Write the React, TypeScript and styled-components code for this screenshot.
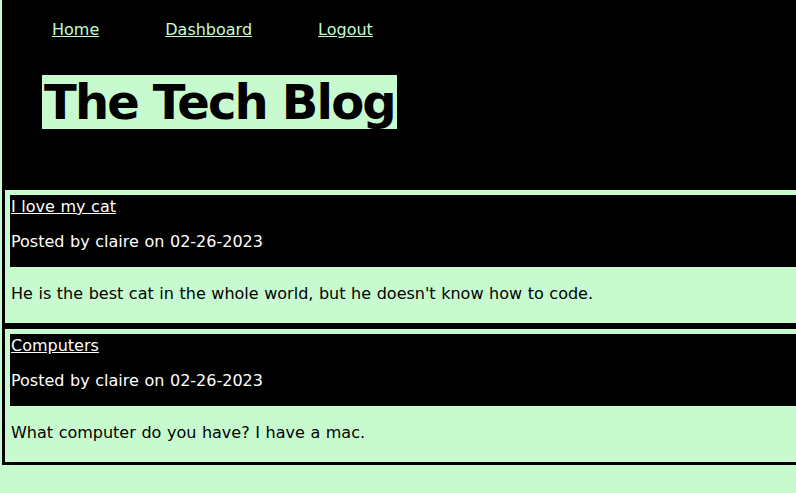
import React from "react";
import styled, { createGlobalStyle } from "styled-components";

const GREEN = "#c7fbcf";

const Global = createGlobalStyle`
  html, body {
    margin: 0;
    padding: 0;
    background: ${GREEN};
    overflow: hidden;
    font-family: "DejaVu Sans", Verdana, sans-serif;
    font-size: 16px;
    word-spacing: 0.5px;
  }
`;

const Page = styled.div`
  padding-left: 2px;
  width: 840px;
`;

const Header = styled.header`
  background: #000;
  height: 190px;
  display: flex;
  flex-direction: column;
  align-items: flex-start;
`;

const Nav = styled.nav`
  display: flex;
  gap: 66px;
  padding: 20px 0 0 50px;
  line-height: 19px;
  word-spacing: 0;
`;

const NavLink = styled.a`
  color: ${GREEN};
  text-decoration: underline;
  cursor: pointer;
`;

const Title = styled.h1`
  margin: 36px 0 0 40px;
  background: ${GREEN};
  color: #000;
  font-size: 48px;
  font-weight: bold;
  letter-spacing: -1.85px;
  word-spacing: 0;
  line-height: 54px;
  padding: 0 2px;
`;

const Card = styled.article`
  border: 3px solid #000;
  padding: 5px;
  background: ${GREEN};
  &:first-of-type {
    border-top: none;
  }
`;

const CardHeader = styled.div`
  background: #000;
  color: #fff;
  padding: 0 1px;
  display: flex;
  flex-direction: column;
  line-height: 19px;
`;

const PostTitle = styled.a`
  color: #fff;
  text-decoration: underline;
  padding-top: 2px;
`;

const Meta = styled.p`
  margin: 16px 0 16px;
`;

const Body = styled.p`
  margin: 17px 1px 15px;
  line-height: 19px;
  color: #000;
`;

const posts = [
  {
    title: "I love my cat",
    author: "claire",
    date: "02-26-2023",
    body: "He is the best cat in the whole world, but he doesn't know how to code.",
  },
  {
    title: "Computers",
    author: "claire",
    date: "02-26-2023",
    body: "What computer do you have? I have a mac.",
  },
];

export default function App() {
  return (
    <>
      <Global />
      <Page>
        <Header>
          <Nav>
            <NavLink>Home</NavLink>
            <NavLink>Dashboard</NavLink>
            <NavLink>Logout</NavLink>
          </Nav>
          <Title>The Tech Blog</Title>
        </Header>
        <main>
          {posts.map((p) => (
            <Card key={p.title}>
              <CardHeader>
                <PostTitle>{p.title}</PostTitle>
                <Meta>
                  Posted by {p.author} on {p.date}
                </Meta>
              </CardHeader>
              <Body>{p.body}</Body>
            </Card>
          ))}
        </main>
      </Page>
    </>
  );
}
